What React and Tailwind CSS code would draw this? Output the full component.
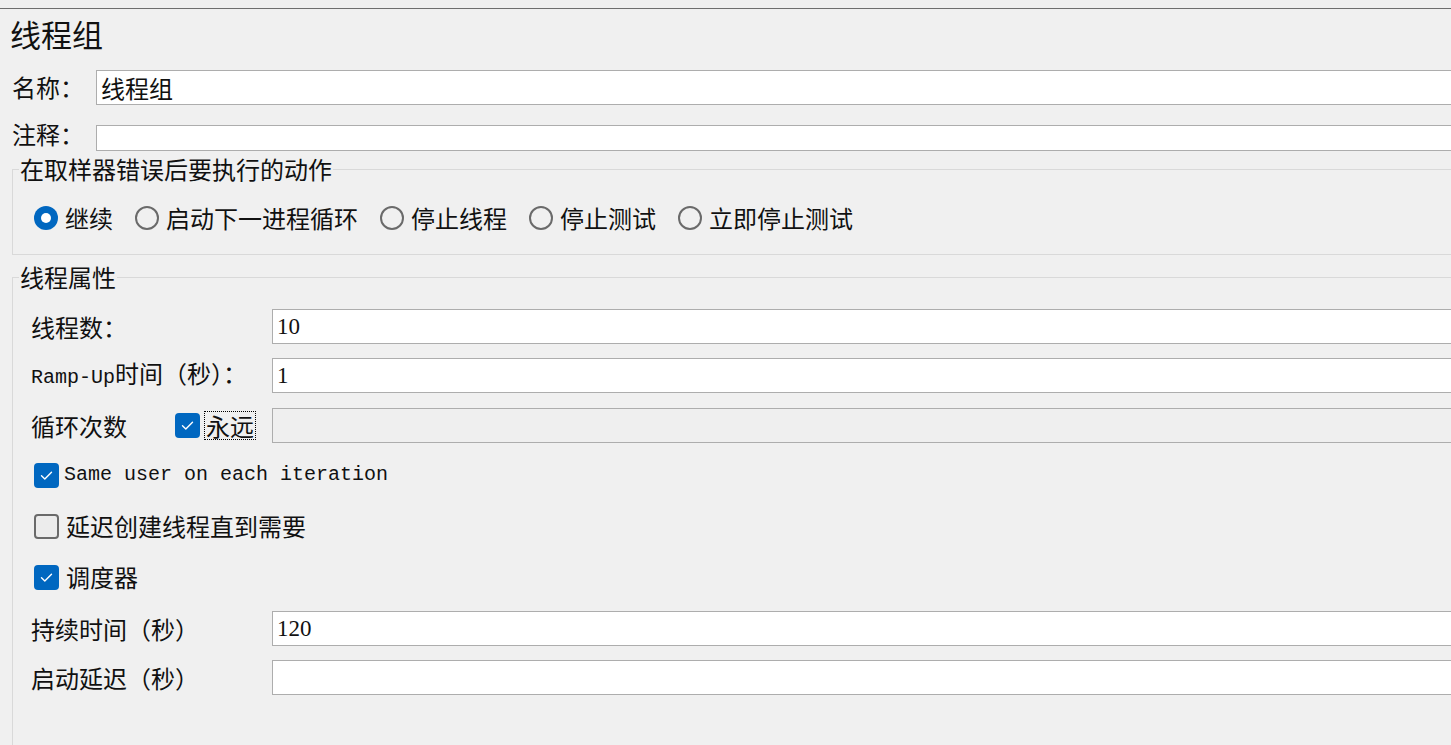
import React from "react";

const CJK = "font-['Noto_Sans_CJK_SC',sans-serif]";
const MONO = "font-['Liberation_Mono','Noto_Sans_CJK_SC',monospace]";
const DIGIT = "font-['Liberation_Serif','Noto_Sans_CJK_SC',serif]";

function Check({ checked }) {
  if (checked) {
    return (
      <span className="w-[25px] h-[25px] rounded-[4px] bg-[#0067c0] flex items-center justify-center shrink-0">
        <svg width="25" height="25" viewBox="0 0 25 25" fill="none">
          <path d="M7.5 12.8l3.3 3.2 6.7-6.8" stroke="white" strokeWidth="1.4" strokeLinecap="round" strokeLinejoin="round" />
        </svg>
      </span>
    );
  }
  return <span className="w-[25px] h-[25px] rounded-[4px] border-2 border-[#6a6a6a] bg-[#ececec] shrink-0" />;
}

function Radio({ checked, label }) {
  return (
    <div className="flex items-center gap-[7px]">
      {checked ? (
        <span className="w-[24px] h-[24px] rounded-full bg-[#0067c0] flex items-center justify-center shrink-0">
          <span className="w-[10px] h-[10px] rounded-full bg-white" />
        </span>
      ) : (
        <span className="w-[24px] h-[24px] rounded-full border-2 border-[#6a6a6a] shrink-0" />
      )}
      <span className="text-[24px] leading-[28px] whitespace-nowrap">{label}</span>
    </div>
  );
}

function Field({ value, digits, height = "h-[35px]", disabled }) {
  return (
    <div
      className={`flex-1 -mr-[20px] ${height} border border-[#adadad] ${
        disabled ? "bg-[#efefef]" : "bg-white"
      } flex items-center pl-[4px]`}
    >
      {value && (
        <span className={digits ? `${DIGIT} text-[23px] leading-[28px]` : "text-[24px] leading-[28px]"}>{value}</span>
      )}
    </div>
  );
}

function Row({ label, children, className = "" }) {
  return (
    <div className={`flex items-center ${className}`}>
      <div className="w-[241px] shrink-0 text-[24px] leading-[28px] whitespace-nowrap">{label}</div>
      {children}
    </div>
  );
}

function CheckRow({ checked, children, className = "" }) {
  return (
    <div className={`flex items-center h-[28px] pl-[21px] gap-[5px] ${className}`}>
      <Check checked={checked} />
      {children}
    </div>
  );
}

export default function App() {
  return (
    <div className={`w-[1451px] h-[745px] overflow-hidden bg-[#f0f0f0] text-[#111] ${CJK} pt-2`}>
      <div className="border-t border-[#6e6e6e]" />
      <div className="mt-[5px] pl-[10px] h-[43px] text-[31px] leading-[40px]">线程组</div>

      <div className="mt-[13px] flex items-center h-[35px]">
        <div className="w-[96px] pl-[12px] pb-[2px] shrink-0 text-[24px] leading-[28px]">名称：</div>
        <Field value="线程组" />
      </div>

      <div className="mt-[20px] flex items-center h-[26px]">
        <div className="w-[96px] pl-[12px] pb-[8px] shrink-0 text-[24px] leading-[24px]">注释：</div>
        <Field height="h-[26px]" />
      </div>

      <fieldset className="mt-[4px] ml-[12px] -mr-[20px] border border-[#d9d9d9]">
        <legend className="ml-[6px] px-[1px] text-[24px] leading-[28px]">在取样器错误后要执行的动作</legend>
        <div className="flex items-center h-[28px] gap-[22px] mt-[21px] mb-[22px] pl-[21px]">
          <Radio checked label="继续" />
          <Radio label="启动下一进程循环" />
          <Radio label="停止线程" />
          <Radio label="停止测试" />
          <Radio label="立即停止测试" />
        </div>
      </fieldset>

      <fieldset className="mt-[8px] ml-[12px] -mr-[20px] h-[600px] border border-[#d9d9d9]">
        <legend className="ml-[6px] px-[1px] text-[24px] leading-[28px]">线程属性</legend>
        <div className="flex flex-col">
          <Row label="线程数：" className="mt-[18px] pl-[18px] h-[35px]">
            <Field value="10" digits />
          </Row>
          <Row
            label={
              <span>
                <span className={`${MONO} text-[20px]`}>Ramp-Up</span>时间（秒）：
              </span>
            }
            className="mt-[14px] pl-[18px] h-[35px]"
          >
            <Field value="1" digits />
          </Row>
          <div className="mt-[15px] pl-[18px] h-[35px] flex items-center">
            <div className="w-[241px] shrink-0 flex items-center">
              <span className="w-[144px] shrink-0 text-[24px] leading-[28px]">循环次数</span>
              <Check checked />
              <span className="ml-[4px] border border-dotted border-black text-[24px] leading-[27px] px-[1px]">永远</span>
            </div>
            <Field disabled />
          </div>

          <CheckRow checked className="mt-[18px]">
            <span className={`${MONO} text-[20px] leading-[28px] whitespace-nowrap`}>Same user on each iteration</span>
          </CheckRow>
          <CheckRow className="mt-[23px]">
            <span className="text-[24px] leading-[28px] ml-[2px]">延迟创建线程直到需要</span>
          </CheckRow>
          <CheckRow checked className="mt-[23px]">
            <span className="text-[24px] leading-[28px] ml-[2px]">调度器</span>
          </CheckRow>

          <Row label="持续时间（秒）" className="mt-[20px] pl-[18px] h-[35px]">
            <Field value="120" digits />
          </Row>
          <Row label="启动延迟（秒）" className="mt-[14px] pl-[18px] h-[35px]">
            <Field />
          </Row>
        </div>
      </fieldset>
    </div>
  );
}
